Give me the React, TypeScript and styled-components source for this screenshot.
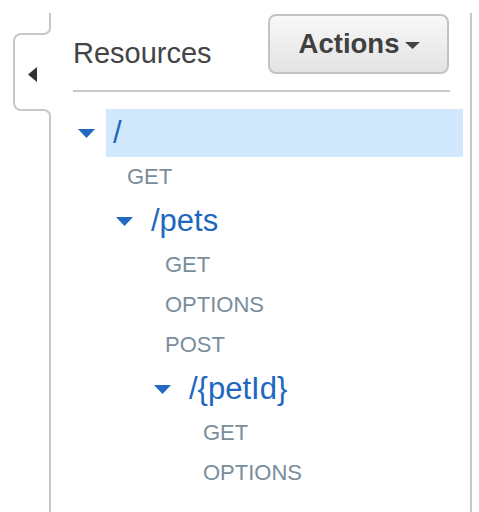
import React from 'react';
import styled, { createGlobalStyle } from 'styled-components';

interface Resource {
  path: string;
  methods: string[];
  children?: Resource[];
}

const tree: Resource = {
  path: '/',
  methods: ['GET'],
  children: [
    {
      path: '/pets',
      methods: ['GET', 'OPTIONS', 'POST'],
      children: [{ path: '/{petId}', methods: ['GET', 'OPTIONS'] }],
    },
  ],
};

const GlobalStyle = createGlobalStyle`
  html, body {
    margin: 0;
    padding: 0;
    background: #ffffff;
  }
  body {
    font-family: "Liberation Sans", Arial, Helvetica, sans-serif;
  }
`;

const CaretDown = ({ color, width, height }: { color: string; width: number; height: number }) => (
  <svg width={width} height={height} viewBox={`0 0 ${width} ${height}`} style={{ display: 'block', flexShrink: 0 }}>
    <polygon points={`0,0 ${width},0 ${width / 2},${height}`} fill={color} />
  </svg>
);

const ResourceNode = ({ node, depth, selected }: { node: Resource; depth: number; selected?: boolean }) => (
  <>
    <ResourceRow $depth={depth}>
      <CaretDown color="#2168c0" width={17} height={9} />
      <ResourceLabel $selected={selected}>{node.path}</ResourceLabel>
    </ResourceRow>
    {node.methods.map((m) => (
      <MethodRow key={node.path + m} $depth={depth}>
        {m}
      </MethodRow>
    ))}
    {node.children?.map((child) => (
      <ResourceNode key={child.path} node={child} depth={depth + 1} />
    ))}
  </>
);

const App = () => {
  return (
    <>
      <GlobalStyle />
      <Panel>
        <CollapseTab>
          <span className="fillet top" />
          <span className="fillet bottom" />
          <svg width="9" height="15" viewBox="0 0 9 15" style={{ position: 'relative', display: 'block' }}>
            <polygon points="9,0 9,15 0,7.5" fill="#333333" />
          </svg>
        </CollapseTab>
        <Header>
          <Title>Resources</Title>
          <ActionsButton>
            Actions
            <CaretDown color="#444444" width={15} height={7} />
          </ActionsButton>
        </Header>
        <Tree>
          <ResourceNode node={tree} depth={0} selected />
        </Tree>
      </Panel>
    </>
  );
};

const Panel = styled.div`
  position: relative;
  box-sizing: border-box;
  width: 423px;
  min-height: calc(100vh - 13px);
  margin: 13px 0 0 49px;
  border-left: 2px solid #c8c8c8;
  border-right: 2px solid #c8c8c8;
`;

const CollapseTab = styled.div`
  position: absolute;
  left: -38px;
  top: 20px;
  box-sizing: border-box;
  width: 30px;
  height: 78px;
  border: 2px solid #c8c8c8;
  border-right: none;
  border-radius: 8px 0 0 8px;
  background: #ffffff;
  display: flex;
  align-items: center;
  padding: 5px 0 0 13px;
  cursor: pointer;

  &::before {
    content: '';
    position: absolute;
    left: 28px;
    top: -10px;
    width: 8px;
    height: 94px;
    background: #ffffff;
  }

  .fillet {
    position: absolute;
    left: 28px;
    box-sizing: border-box;
    width: 8px;
    height: 10px;
    background: #ffffff;
    border-right: 2px solid #c8c8c8;
  }

  .top {
    top: -10px;
    border-bottom: 2px solid #c8c8c8;
    border-bottom-right-radius: 7px;
  }

  .bottom {
    top: 74px;
    border-top: 2px solid #c8c8c8;
    border-top-right-radius: 7px;
  }
`;

const Header = styled.div`
  display: flex;
  justify-content: space-between;
  align-items: flex-start;
  height: 77px;
  margin: 0 20px 0 22px;
  border-bottom: 2px solid #c9c9c9;
`;

const Title = styled.h2`
  margin: 23px 0 0;
  font-size: 29px;
  line-height: 34px;
  font-weight: normal;
  color: #444444;
`;

const ActionsButton = styled.button`
  box-sizing: border-box;
  display: flex;
  align-items: center;
  justify-content: center;
  gap: 6px;
  width: 181px;
  height: 60px;
  margin: 1px 1px 0 0;
  padding: 0 0 0 2px;
  border: 2px solid #c3c3c3;
  border-radius: 8px;
  background: linear-gradient(#f8f8f8, #e3e3e3);
  font-family: inherit;
  font-size: 27.5px;
  font-weight: bold;
  color: #404040;
  cursor: pointer;

  svg {
    margin-top: 3px;
  }
`;

const Tree = styled.div`
  margin-top: 17px;
`;

const ResourceRow = styled.div<{ $depth: number }>`
  display: flex;
  align-items: center;
  height: 48px;
  padding-left: ${({ $depth }) => 27 + $depth * 38}px;
`;

const ResourceLabel = styled.div<{ $selected?: boolean }>`
  flex: 1;
  align-self: stretch;
  margin: 0 7px 0 11px;
  padding-left: 7px;
  background: ${({ $selected }) => ($selected ? '#d2e8fc' : 'transparent')};
  font-size: 31px;
  line-height: 48px;
  color: #1e67c1;
`;

const MethodRow = styled.div<{ $depth: number }>`
  height: 40px;
  padding-left: ${({ $depth }) => 76 + $depth * 38}px;
  font-size: 22px;
  line-height: 40px;
  color: #7a8d9b;
`;

export default App;
